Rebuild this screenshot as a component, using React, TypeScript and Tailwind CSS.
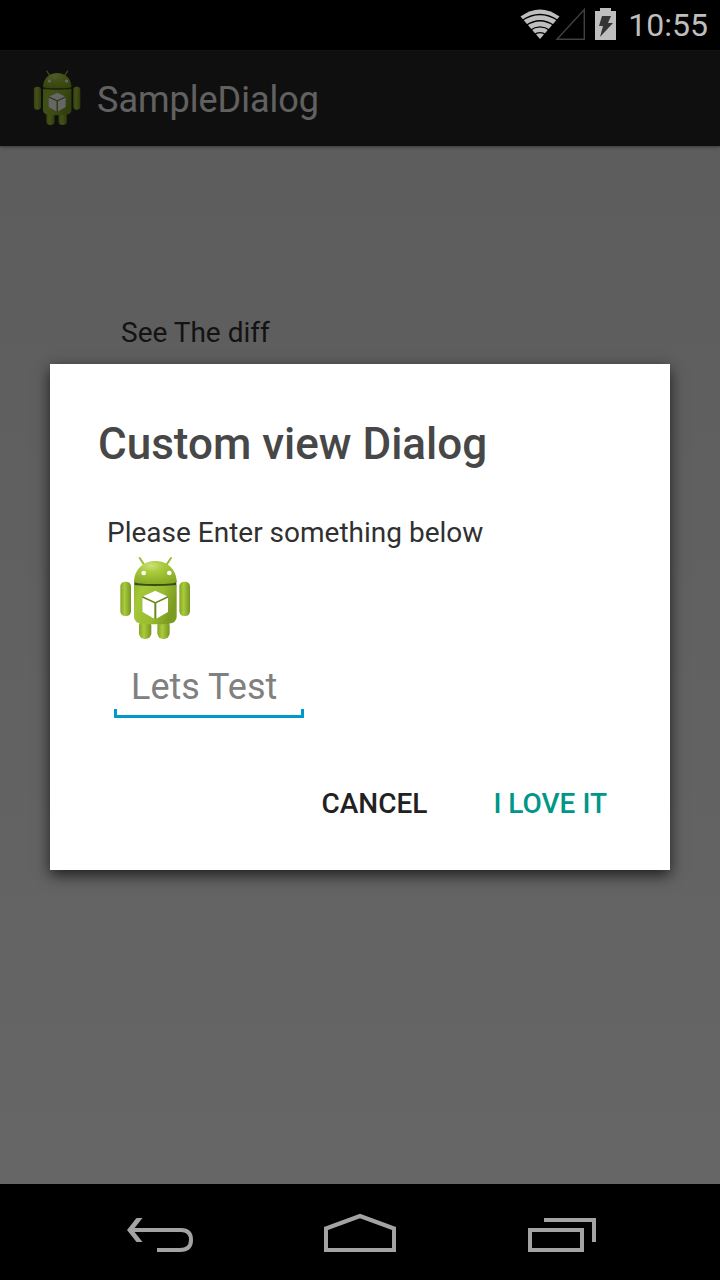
import { useId } from "react";

function Robot({ className }: { className: string }) {
  const id = useId();
  const body = `${id}-body`;
  const head = `${id}-head`;
  const limb = `${id}-limb`;
  return (
    <svg viewBox="21 12 288 288" className={className} aria-hidden="true">
      <defs>
        <linearGradient id={body} x1="0" x2="1" y1="0" y2="0.35">
          <stop offset="0" stopColor="#93b52c" />
          <stop offset="0.2" stopColor="#a4c83a" />
          <stop offset="0.65" stopColor="#98bb2f" />
          <stop offset="1" stopColor="#7b9b22" />
        </linearGradient>
        <radialGradient id={head} cx="0.4" cy="0.2" r="0.85">
          <stop offset="0" stopColor="#cfe07a" />
          <stop offset="0.35" stopColor="#a8ca3a" />
          <stop offset="1" stopColor="#86a826" />
        </radialGradient>
        <linearGradient id={limb} x1="0" x2="1" y1="0" y2="0">
          <stop offset="0" stopColor="#87a528" />
          <stop offset="0.4" stopColor="#a9cb3d" />
          <stop offset="1" stopColor="#76951f" />
        </linearGradient>
      </defs>
      <path d="M119 39l13 20M213 39l-13 20" stroke="#9dbd35" strokeWidth="6" strokeLinecap="round" />
      <rect x="117" y="225" width="37" height="57" rx="17" fill={`url(#${limb})`} />
      <rect x="172" y="225" width="37" height="57" rx="17" fill={`url(#${limb})`} />
      <rect x="61" y="110" width="32" height="103" rx="14" fill={`url(#${limb})`} />
      <rect x="238" y="110" width="32" height="103" rx="14" fill={`url(#${limb})`} />
      <path d="M103 106h126v18H103z" fill="#3b4c10" />
      <path d="M102 120q63 6 128 0v95q0 18-24 21q-40 4-80 0q-24-3-24-21z" fill={`url(#${body})`} />
      <path d="M102 110C103 73 130 48 166 48s63 25 64 62q-4 7-64 7t-64-7z" fill={`url(#${head})`} />
      <circle cx="131" cy="84" r="7" fill="#fff" />
      <circle cx="208" cy="84" r="7" fill="#fff" />
      <path d="M166 138l38 17v46l-38 21-39-21v-46z" fill="#6a8720" />
      <path d="M166 137l36 17-36 17-37-17z" fill="#fff" />
      <path d="M127 158l36 17v46l-36-20zM204 158l-35 17v46l35-20z" fill="#fff" />
    </svg>
  );
}

function StatusBar() {
  return (
    <header className="flex h-[50px] shrink-0 items-center justify-end bg-black pr-3 text-[#bebebe]">
      <svg viewBox="0 0 100 50" className="h-[50px] w-[100px]" aria-hidden="true">
        <path d="M20 39L0.500 16.500Q20 2.500 39.500 16.500z" fill="#bebebe" />
        <g fill="none" stroke="#000" strokeWidth="1.400">
          <path d="M2 20.500Q20 8.500 38 20.500" />
          <path d="M6 25.500Q20 16 34 25.500" />
          <path d="M10 30.300Q20 23.500 30 30.300" />
          <path d="M14 34.800Q20 30.500 26 34.800" />
        </g>
        <path d="M37 39.300L64.300 9.500v29.800z" fill="none" stroke="#404040" strokeWidth="1.400" />
        <path d="M75 11h5V8h11v3h5v29H75z" fill="#bebebe" />
        <path d="M82 16h9l-3 7h5L80 37l3-11h-4z" fill="#343434" />
      </svg>
      <time className="ml-2 text-[32px] leading-[50px]">10:55</time>
    </header>
  );
}

function NavBar() {
  return (
    <nav className="flex h-24 shrink-0 justify-center bg-black text-[#a3a3a3]">
      <div className="flex w-full max-w-[612px] justify-between">
        <button aria-label="Back" className="flex flex-1 justify-center">
          <svg viewBox="0 0 96 96" className="size-24" fill="none" stroke="currentColor" strokeWidth="4" aria-hidden="true">
            <path d="M23 46h50q10 0 10 10t-11 10H49" />
            <path d="M28.500 34h6L25 46l9.500 12h-6L19 46z" fill="currentColor" stroke="none" />
          </svg>
        </button>
        <button aria-label="Home" className="flex flex-1 justify-center">
          <svg viewBox="0 0 96 96" className="size-24" fill="none" stroke="currentColor" strokeWidth="4" aria-hidden="true">
            <path d="M14 66V44.500L48 32l34 12.500V66z" />
          </svg>
        </button>
        <button aria-label="Recent apps" className="flex flex-1 justify-center">
          <svg viewBox="0 0 96 96" className="size-24" fill="none" stroke="currentColor" strokeWidth="4" aria-hidden="true">
            <path d="M14 46h52v20H14zM28 36h50v22" />
          </svg>
        </button>
      </div>
    </nav>
  );
}

function CustomDialog() {
  return (
    <div className="absolute inset-0 flex items-center justify-center bg-black/60 px-[50px]">
      <section
        role="dialog"
        aria-modal="true"
        aria-labelledby="dialog-title"
        className="w-full max-w-[620px] bg-white px-12 pt-[54px] pb-[33px] shadow-[0_5px_14px_rgba(0,0,0,0.7)]"
      >
        <h2 id="dialog-title" className="text-[44px] leading-[52px] font-medium text-[#474747]">
          Custom view Dialog
        </h2>
        <div className="mt-[47px] flex flex-col items-start pl-[9px]">
          <label htmlFor="entry" className="text-[28px] leading-8 text-[#303030]">
            Please Enter something below
          </label>
          <Robot className="size-24" />
          <div className="mt-5 ml-[7px] flex w-[190px] flex-col">
            <input
              id="entry"
              type="text"
              placeholder="Lets Test"
              className="h-11 w-full bg-transparent px-[17px] text-[36px] leading-[44px] outline-none placeholder:text-[#808080] placeholder:opacity-100"
            />
            <span className="h-[9px] border-x-3 border-b-3 border-[#0099cc]" />
          </div>
        </div>
        <div className="mt-[53px] flex justify-end gap-9 text-[28px] leading-8 font-medium">
          <button className="px-[15px] py-[17px] text-[#212121]">CANCEL</button>
          <button className="px-[15px] py-[17px] text-[#009688]">I LOVE IT</button>
        </div>
      </section>
    </div>
  );
}

export default function App() {
  return (
    <div className="flex min-h-screen flex-col bg-black font-[Roboto,sans-serif]">
      <StatusBar />
      <div className="relative flex flex-1 flex-col">
        <div className="z-0 flex h-24 shrink-0 items-start border-t border-[#323232] bg-[#262626] pt-[14px] pl-[25px] shadow-[0_1px_3px_rgba(0,0,0,0.4)]">
          <Robot className="size-16" />
          <h1 className="ml-2 text-[36px] leading-[70px] text-[#f3f3f3]">SampleDialog</h1>
        </div>
        <main className="flex-1 bg-linear-to-b from-[#e8e8e8] to-white px-[121px] pt-[171px]">
          <p className="text-[28px] leading-8 text-[#303030]">See The diff</p>
        </main>
        <CustomDialog />
      </div>
      <NavBar />
    </div>
  );
}
